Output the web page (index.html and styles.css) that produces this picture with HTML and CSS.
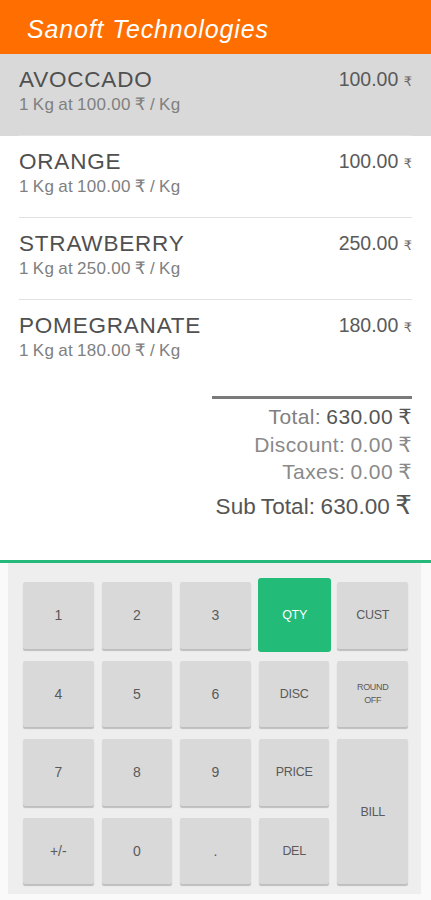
FILE: index.html
```html
<!DOCTYPE html>
<html lang="en">
<head>
<meta charset="utf-8">
<title>Sanoft Technologies</title>
<link rel="stylesheet" href="styles.css">
</head>
<body>
<div class="app">
  <header class="topbar">
    <h1 class="title">Sanoft Technologies</h1>
  </header>
  <main class="content">
    <ul class="items">
      <li class="item selected">
        <div class="item-inner">
          <div class="item-info">
            <div class="item-name">AVOCCADO</div>
            <div class="item-sub">1 Kg at 100.00 ₹ / Kg</div>
          </div>
          <div class="item-price">100.00 <span class="rs">₹</span></div>
        </div>
      </li>
      <li class="item">
        <div class="item-inner">
          <div class="item-info">
            <div class="item-name">ORANGE</div>
            <div class="item-sub">1 Kg at 100.00 ₹ / Kg</div>
          </div>
          <div class="item-price">100.00 <span class="rs">₹</span></div>
        </div>
      </li>
      <li class="item">
        <div class="item-inner">
          <div class="item-info">
            <div class="item-name">STRAWBERRY</div>
            <div class="item-sub">1 Kg at 250.00 ₹ / Kg</div>
          </div>
          <div class="item-price">250.00 <span class="rs">₹</span></div>
        </div>
      </li>
      <li class="item last">
        <div class="item-inner">
          <div class="item-info">
            <div class="item-name">POMEGRANATE</div>
            <div class="item-sub">1 Kg at 180.00 ₹ / Kg</div>
          </div>
          <div class="item-price">180.00 <span class="rs">₹</span></div>
        </div>
      </li>
    </ul>
    <section class="totals">
      <div class="totals-rule"></div>
      <div class="trow"><span class="tlabel">Total:</span> <span class="tval">630.00 ₹</span></div>
      <div class="trow light"><span class="tlabel">Discount:</span> <span class="tval2">0.00 ₹</span></div>
      <div class="trow light"><span class="tlabel">Taxes:</span> <span class="tval2">0.00 ₹</span></div>
      <div class="trow sub"><span>Sub Total:</span> <span>630.00 <span class="rs-big">₹</span></span></div>
    </section>
  </main>
  <section class="keypad-wrap">
    <div class="keypad">
      <button class="key">1</button>
      <button class="key">2</button>
      <button class="key">3</button>
      <button class="key active lbl">QTY</button>
      <button class="key lbl">CUST</button>
      <button class="key">4</button>
      <button class="key">5</button>
      <button class="key">6</button>
      <button class="key lbl">DISC</button>
      <button class="key tiny">ROUND<br>OFF</button>
      <button class="key">7</button>
      <button class="key">8</button>
      <button class="key">9</button>
      <button class="key lbl">PRICE</button>
      <button class="key lbl bill">BILL</button>
      <button class="key">+/-</button>
      <button class="key">0</button>
      <button class="key">.</button>
      <button class="key lbl">DEL</button>
    </div>
  </section>
</div>
</body>
</html>
```
FILE: styles.css
```css
* { box-sizing: border-box; }
html, body {
  margin: 0;
  padding: 0;
  background: #ffffff;
}
body {
  font-family: "Liberation Sans", Arial, "DejaVu Sans", "Noto Sans", sans-serif;
}
.app {
  width: 431px;
  height: 900px;
  display: flex;
  flex-direction: column;
  overflow: hidden;
}
.topbar {
  height: 54px;
  background: #ff6e00;
  flex: none;
}
.title {
  margin: 0;
  padding: 14px 0 0 27px;
  font-size: 25px;
  line-height: 30px;
  font-weight: normal;
  font-style: italic;
  letter-spacing: 0.85px;
  color: #ffffff;
}
.content {
  flex: 1;
  background: #ffffff;
}
.items {
  list-style: none;
  margin: 0;
  padding: 0;
}
.item {
  height: 82px;
  padding: 0 19px;
}
.item.selected {
  background: #d9d9d9;
}
.item-inner {
  height: 82px;
  display: flex;
  justify-content: space-between;
  align-items: flex-start;
  border-bottom: 1px solid #e2e2e2;
  padding-top: 12px;
}
.item.last .item-inner {
  border-bottom: none;
}
.item-name {
  font-size: 22.5px;
  line-height: 28px;
  color: #505050;
  letter-spacing: 0.8px;
}
.item-sub {
  font-size: 17px;
  line-height: 20px;
  color: #808080;
  margin-top: 1px;
  letter-spacing: 0.3px;
  word-spacing: -1px;
}
.item-price {
  font-size: 19.5px;
  line-height: 26px;
  color: #5a5a5a;
  letter-spacing: 0;
}
.rs {
  font-size: 13px;
  color: #666;
}
.totals {
  display: flex;
  flex-direction: column;
  align-items: flex-end;
  padding: 14px 19px 0 0;
}
.totals-rule {
  width: 200px;
  height: 3px;
  background: #7a7a7a;
  margin-bottom: 4px;
}
.trow {
  font-size: 21px;
  line-height: 28px;
  color: #808080;
  letter-spacing: 0.4px;
  word-spacing: -1px;
}
.tval { color: #555555; }
.tval2 { color: #8a8a8a; }
.trow.light { color: #8a8a8a; line-height: 27px; }
.trow.sub {
  font-size: 22.5px;
  line-height: 36px;
  color: #555555;
  margin-top: 2px;
  letter-spacing: 0.1px;
}
.rs-big {
  font-size: 26px;
}
.keypad-wrap {
  flex: none;
  height: 340px;
  border-top: 3px solid #25b87a;
  background: #fafafa;
  padding: 0 10px 6px 8px;
}
.keypad {
  height: 331px;
  background: #eeeeee;
  display: grid;
  grid-template-columns: repeat(5, 1fr);
  grid-template-rows: repeat(4, 66.5px);
  gap: 12px 8px;
  padding: 19px 13px 9px 15px;
}
.key {
  border: none;
  margin: 0;
  padding: 0;
  background: #d9d9d9;
  border-radius: 2px;
  box-shadow: 0 2px 1px rgba(0, 0, 0, 0.2);
  font-family: "Liberation Sans", Arial, sans-serif;
  font-size: 14px;
  color: #5a5a5a;
  display: flex;
  align-items: center;
  justify-content: center;
  text-align: center;
}
.key.lbl {
  font-size: 12.5px;
  letter-spacing: -0.3px;
}
.key.tiny {
  font-size: 9px;
  line-height: 13px;
  letter-spacing: -0.3px;
}
.key.active {
  background: #22bb77;
  color: #ffffff;
  margin: -4px -2px -3px -1px;
  border-radius: 3px;
  box-shadow: none;
}
.key.bill {
  grid-row: 3 / span 2;
  grid-column: 5;
}
```
